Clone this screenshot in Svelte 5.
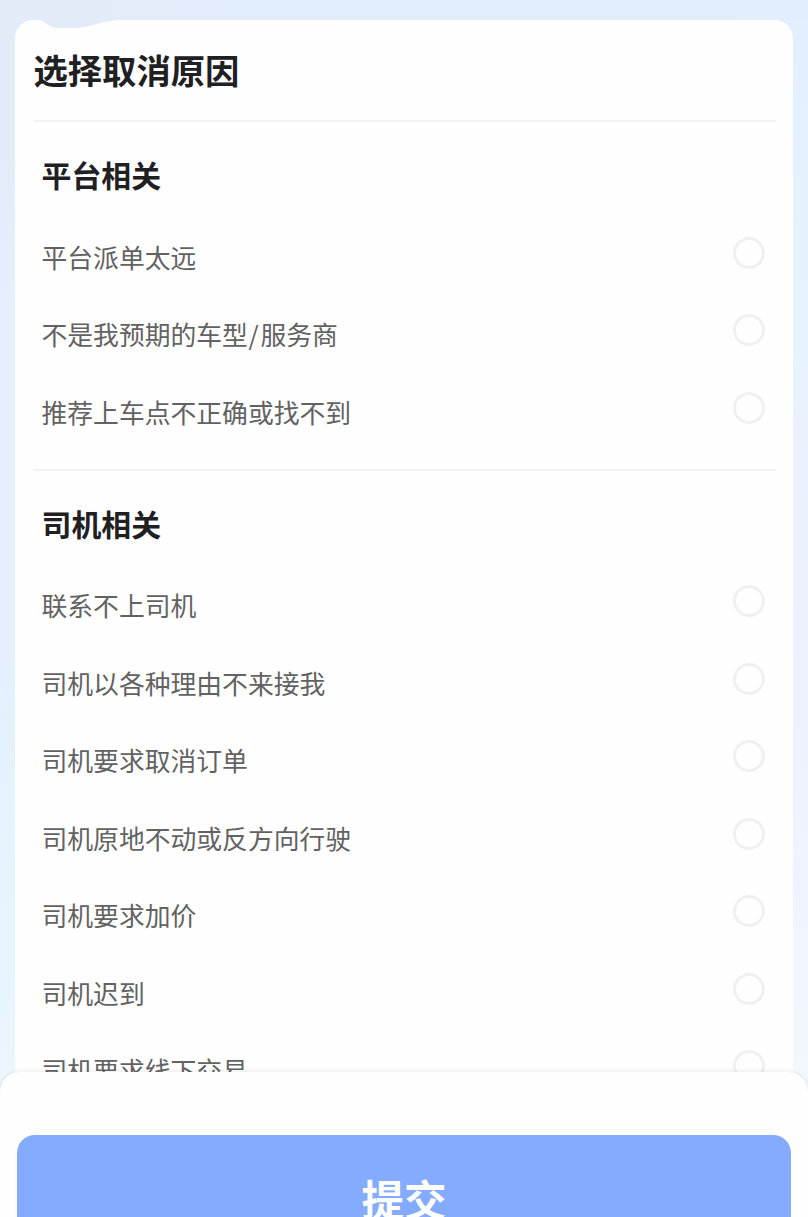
<script>
  const groups = [
    { title: '平台相关', items: ['平台派单太远', '不是我预期的车型/服务商', '推荐上车点不正确或找不到'] },
    {
      title: '司机相关',
      items: ['联系不上司机', '司机以各种理由不来接我', '司机要求取消订单', '司机原地不动或反方向行驶', '司机要求加价', '司机迟到', '司机要求线下交易']
    }
  ];
  let selected = $state('');
</script>

<main>
  <section class="card">
    <svg class="notch" width="90" height="10" viewBox="0 0 90 10" aria-hidden="true"><path d="M4 0H90C62 0 58 8 36 8H22C12 8 10 1 4 0Z" /></svg>
    <h1>选择取消原因</h1>
    {#each groups as group}
      <div class="group">
        <h2>{group.title}</h2>
        {#each group.items as item}
          <button class="row" onclick={() => (selected = item)}>
            <span class="label">{#each item.split('/') as part, n}{#if n}<span class="slash">/</span>{/if}{part}{/each}</span>
            <i class:on={selected === item}></i>
          </button>
        {/each}
      </div>
    {/each}
  </section>
  <footer><button class="submit">提交</button></footer>
</main>

<style>
  :global(body) { margin: 0; overflow: hidden; }
  main {
    height: 1217px;
    box-sizing: border-box;
    padding: 20px 15px 0;
    overflow: hidden;
    position: relative;
    background:
      linear-gradient(90deg, #e2ecf9, #e2eefd) top / 100% 20px no-repeat,
      linear-gradient(180deg, #e2ecf9 0, #e2ecf9 140px, #e5effd 300px, #e5effe 650px, #e4f2fd 740px, #ebf6fe 1080px) left / 50% 100% no-repeat,
      linear-gradient(180deg, #e2eefd 0, #e5f2fe 180px, #e6f3fe 350px, #eaf1fd 420px, #edf1fe 600px, #eff4fe 900px, #f3f8fe 1080px) right / 50% 100% no-repeat;
    font-family: "Noto Sans CJK SC", sans-serif;
  }
  button { font-family: inherit; border: 0; }
  .card {
    height: 1197px;
    box-sizing: border-box;
    padding: 0 17px 0 19px;
    border-radius: 18px 18px 0 0;
    background: #fefefe;
    position: relative;
    overflow: hidden;
  }
  .notch { position: absolute; left: 21px; top: 0; fill: #e2ecf9; }
  h1 { height: 100px; margin: 0; font-size: 34.3px; line-height: 99px; font-weight: 700; color: #202022; text-indent: -0.5px; }
  .group { border-top: 2px solid #f2f2f2; height: 346.5px; padding: 0 8px; }
  h2 { margin: 0; height: 96px; font-size: 29.9px; line-height: 104px; font-weight: 700; color: #202022; text-indent: -0.5px; }
  .row {
    width: 100%;
    height: 77.5px;
    padding: 0;
    display: flex;
    align-items: center;
    justify-content: space-between;
    background: none;
    color: #626262;
    font-size: 25.8px;
    text-align: left;
  }
  .label { margin: 0 0 1px -0.5px; }
  .slash { padding: 0 2px 0 0.5px; }
  i {
    box-sizing: border-box;
    width: 32px;
    height: 32px;
    margin: 0 3px 8.5px 0;
    border: 3px solid #f0f0f0;
    border-radius: 50%;
  }
  i.on { border: 9px solid #86acff; }
  footer {
    position: absolute;
    left: 0;
    right: 0;
    bottom: 0;
    height: 145px;
    box-sizing: border-box;
    padding: 63px 17px 0;
    border-radius: 20px 20px 0 0;
    background: #fefefe;
    box-shadow: 0 0 5px rgba(0, 0, 0, 0.1);
    overflow: hidden;
  }
  .submit { width: 100%; height: 124px; border-radius: 18px; padding: 0; background: #84abff; color: #fff; font-size: 42.5px; font-weight: 700; }
</style>
